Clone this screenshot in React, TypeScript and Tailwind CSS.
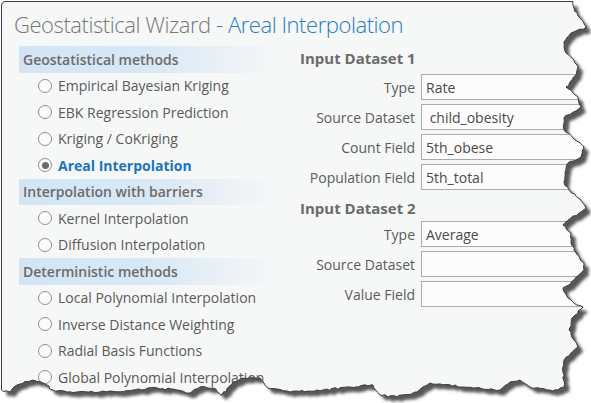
import React from 'react';

type Item = { label: string; selected?: boolean };
type Group = { title: string; items: Item[] };

const groups: Group[] = [
  {
    title: 'Geostatistical methods',
    items: [
      { label: 'Empirical Bayesian Kriging' },
      { label: 'EBK Regression Prediction' },
      { label: 'Kriging / CoKriging' },
      { label: 'Areal Interpolation', selected: true },
    ],
  },
  {
    title: 'Interpolation with barriers',
    items: [{ label: 'Kernel Interpolation' }, { label: 'Diffusion Interpolation' }],
  },
  {
    title: 'Deterministic methods',
    items: [
      { label: 'Local Polynomial Interpolation' },
      { label: 'Inverse Distance Weighting' },
      { label: 'Radial Basis Functions' },
      { label: 'Global Polynomial Interpolation' },
    ],
  },
];

const dataset1 = [
  { label: 'Type', value: 'Rate' },
  { label: 'Source Dataset', value: '\u00a0child_obesity' },
  { label: 'Count Field', value: '5th_obese' },
  { label: 'Population Field', value: '5th_total' },
];

const dataset2 = [
  { label: 'Type', value: 'Average' },
  { label: 'Source Dataset', value: '' },
  { label: 'Value Field', value: '' },
];

// torn page outline (right edge going down, then bottom going left)
const rough: [number, number][] = [
  [573, 1.5], [574, 8], [580, 18], [586, 27], [571, 33], [564, 42], [566, 53], [574, 60],
  [578, 67], [576, 75], [566, 87], [578, 97], [581, 107], [564, 118], [564, 130], [573, 138],
  [584, 147], [581, 157], [568, 163], [564, 182], [569, 190], [581, 200], [586, 208], [581, 212],
  [571, 218], [563, 225], [571, 233], [571, 243], [576, 253], [583, 262], [584, 270], [574, 280],
  [563, 288], [568, 298], [574, 303], [583, 307], [573, 317], [569, 330], [574, 340], [578, 347],
  [564, 360], [563, 372], [564, 387], [558, 390], [550, 390], [530, 387], [520, 380], [510, 382],
  [500, 390], [473, 388], [430, 383], [417, 392], [397, 397], [380, 395], [373, 385], [350, 387],
  [323, 390], [290, 392], [268, 388], [260, 378], [243, 378], [233, 382], [222, 395], [213, 388],
  [200, 387], [190, 393], [177, 390], [157, 388], [133, 390], [100, 392], [67, 392], [53, 390],
  [43, 383], [33, 380], [17, 385], [10, 392], [1.5, 390],
];

function jagged(points: [number, number][]) {
  const out: [number, number][] = [];
  let seed = 7;
  const rnd = () => {
    seed = (seed * 9301 + 49297) % 233280;
    return seed / 233280 - 0.5;
  };
  for (let i = 0; i < points.length - 1; i++) {
    const [x1, y1] = points[i];
    const [x2, y2] = points[i + 1];
    const len = Math.hypot(x2 - x1, y2 - y1);
    const steps = Math.max(1, Math.round(len / 3));
    for (let s = 0; s < steps; s++) {
      const t = s / steps;
      const j = s === 0 ? 0 : 1;
      out.push([x1 + (x2 - x1) * t + rnd() * 2 * j, y1 + (y2 - y1) * t + rnd() * 2 * j]);
    }
  }
  out.push(points[points.length - 1]);
  return out;
}

const pts = jagged(rough);
const pagePath =
  'M1.5,6 Q1.5,1.5 6,1.5 ' + pts.map(([x, y]) => `L${x.toFixed(1)},${y.toFixed(1)}`).join(' ') + ' Z';
const outside = `M-10,-10 H601 V413 H-10 Z ${pagePath}`;

function TornEdge() {
  return (
    <svg className="pointer-events-none absolute inset-0" width="591" height="403" viewBox="0 0 591 403">
      <defs>
        <clipPath id="outside">
          <path d={outside} clipRule="evenodd" />
        </clipPath>
        <filter id="blur" x="-5%" y="-5%" width="110%" height="110%">
          <feGaussianBlur stdDeviation="1.8" />
        </filter>
      </defs>
      <path d={outside} fill="#ffffff" fillRule="evenodd" />
      <g clipPath="url(#outside)">
        <path d={pagePath} fill="#3a3a3a" opacity="0.85" transform="translate(5 5)" filter="url(#blur)" />
      </g>
      <path d={pagePath} fill="none" stroke="#3c3c3c" strokeWidth="1" />
    </svg>
  );
}

function Radio({ selected }: { selected?: boolean }) {
  return (
    <span className="flex h-[14px] w-[14px] shrink-0 items-center justify-center rounded-full border border-[#8f8f8f] bg-[#fbfbfb]">
      {selected && <span className="h-[7px] w-[7px] rounded-full bg-[#6a6a6a]" />}
    </span>
  );
}

function FieldRow({ label, value }: { label: string; value: string }) {
  return (
    <div className="flex h-[26px] items-center">
      <div className="w-[116px] whitespace-nowrap pr-[1px] text-right text-[14px] text-[#5c5c5c]">{label}</div>
      <div className="ml-[5px] flex h-full flex-1 items-center whitespace-nowrap border border-[#ababab] bg-[#fcfcfc] pl-[4px] text-[14px] text-[#4a4a4a]">
        {value}
      </div>
    </div>
  );
}

export default function App() {
  return (
    <div
      className="relative h-[403px] w-[591px] overflow-hidden bg-[#f6f7f7]"
      style={{ fontFamily: '"Open Sans", "Noto Sans", sans-serif' }}
    >
      <h1 className="whitespace-nowrap pl-[14px] pt-[6px] text-[22px] font-light leading-[36px] tracking-[-0.02em] text-[#777777]">
        Geostatistical Wizard <span className="text-[#2a7cc0]">- Areal Interpolation</span>
      </h1>

      <div className="flex">
        <div className="ml-[19px] mt-[4px] w-[258px] shrink-0">
          {groups.map((g) => (
            <div key={g.title}>
              <div className="flex h-[26.5px] items-center whitespace-nowrap bg-gradient-to-r from-[#d3e5f5] via-[#d8e8f5] to-[#f6f7f7] pl-[4px] text-[14px] font-semibold text-[#6b6b6b]">
                {g.title}
              </div>
              {g.items.map((it) => (
                <div key={it.label} className="flex h-[26.5px] items-center gap-[6px] whitespace-nowrap pl-[19px]">
                  <Radio selected={it.selected} />
                  <span
                    className={
                      it.selected
                        ? 'text-[14px] font-bold text-[#1a74bb]'
                        : 'text-[14px] text-[#5a5a5a]'
                    }
                  >
                    {it.label}
                  </span>
                </div>
              ))}
            </div>
          ))}
        </div>

        <div className="ml-[23px] mt-[6px] flex-1">
          <div className="flex h-[20px] items-center text-[15px] font-bold text-[#6b6b6b]">Input Dataset 1</div>
          <div className="mt-[6px] flex flex-col gap-[4px]">
            {dataset1.map((f) => (
              <FieldRow key={f.label} {...f} />
            ))}
          </div>
          <div className="mt-[8px] flex h-[20px] items-center text-[15px] font-bold text-[#6b6b6b]">
            Input Dataset 2
          </div>
          <div className="mt-[3px] flex flex-col gap-[4px]">
            {dataset2.map((f) => (
              <FieldRow key={f.label} {...f} />
            ))}
          </div>
        </div>
      </div>

      <TornEdge />
    </div>
  );
}
